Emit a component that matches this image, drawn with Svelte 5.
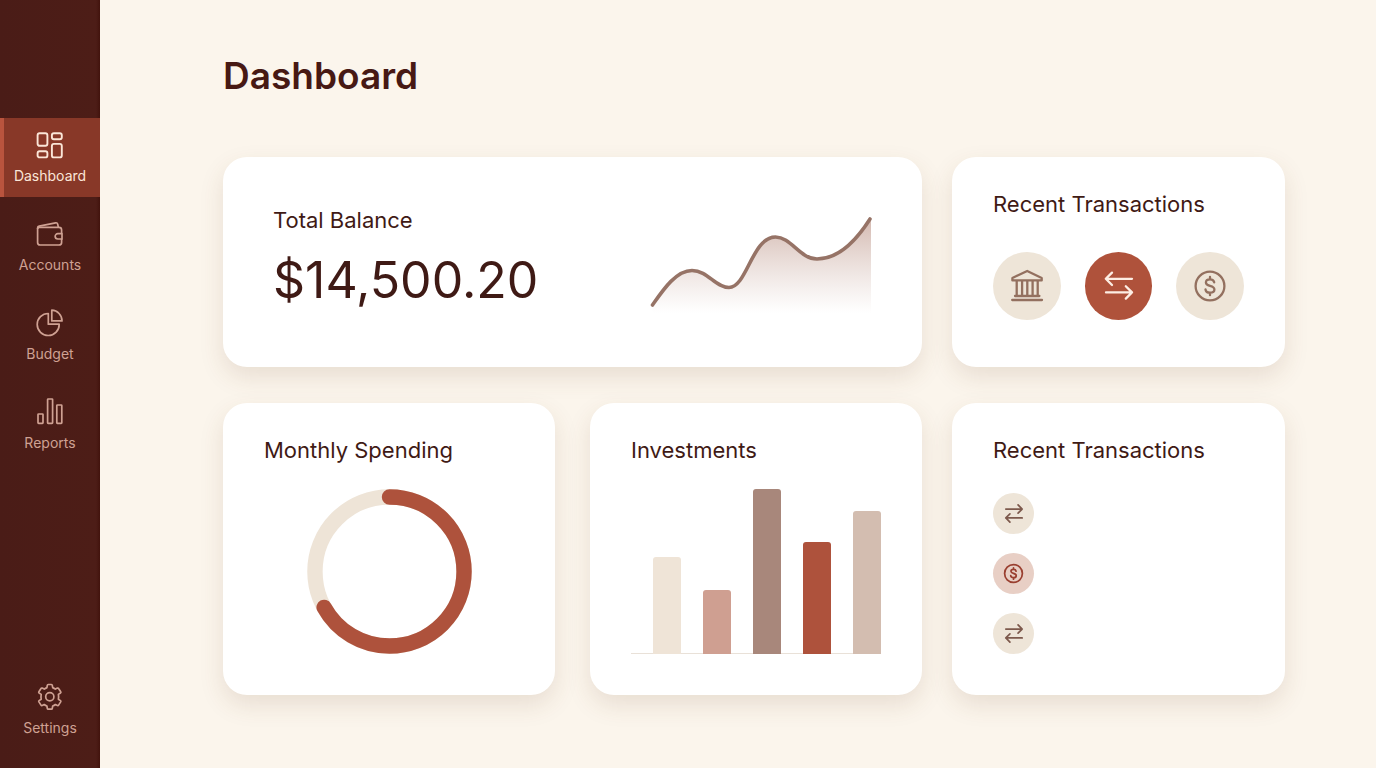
<script>
  const items = [
    { id: 'dashboard', label: 'Dashboard' },
    { id: 'accounts', label: 'Accounts' },
    { id: 'budget', label: 'Budget' },
    { id: 'reports', label: 'Reports' }
  ];
  let active = $state('dashboard');

  const bars = [
    { height: 97, color: '#efe4d7' },
    { height: 64, color: '#cf9f91' },
    { height: 165, color: '#a8877b' },
    { height: 112, color: '#ae523c' },
    { height: 143, color: '#d3bdb0' }
  ];

  const spent = 67;

  const quick = [
    { kind: 'bank', label: 'Bank' },
    { kind: 'transfer', label: 'Transfer' },
    { kind: 'coin', label: 'Payment' }
  ];
  const recent = [
    { kind: 'swap', label: 'Transfer' },
    { kind: 'coin', label: 'Payment' },
    { kind: 'swap', label: 'Transfer' }
  ];
</script>

{#snippet navIcon(id)}
  <svg class="nav-icon" viewBox="0 0 28 28" aria-hidden="true">
    {#if id === 'dashboard'}
      <rect x="1.6" y="2.2" width="9.8" height="12.6" rx="2" />
      <rect x="15.9" y="2.2" width="9.9" height="6" rx="2" />
      <rect x="15.9" y="12.9" width="9.9" height="13.5" rx="2" />
      <rect x="1.6" y="20.2" width="9.8" height="6.2" rx="2" />
    {:else if id === 'accounts'}
      <path d="M25.6 13.6V10Q25.6 7.4 23 7.4H3.4Q1.6 7.4 1.6 9.2V22.4Q1.6 25 4.2 25H23Q25.6 25 25.6 22.4V19" />
      <path d="M1.6 9V8Q1.6 6.5 3.2 6.2L19.6 2.8Q21.3 2.5 21.7 4.2L22.4 7.4" />
      <path d="M26 13.7H21.8A2.6 2.6 0 0 0 21.8 19H26Z" />
    {:else if id === 'budget'}
      <path d="M12.3 4.5V15.2H23.2A11 11 0 1 1 12.3 4.5Z" />
      <path d="M15.8 1.2A10.6 10.6 0 0 1 26 11.9H15.8Z" />
    {:else if id === 'reports'}
      <rect x="2" y="16" width="5" height="9.4" rx="0.6" />
      <rect x="11.6" y="1" width="5" height="24.4" rx="0.6" />
      <rect x="20.8" y="7" width="5" height="18.4" rx="0.6" />
    {:else}
      <circle cx="13.8" cy="13.8" r="4.1" />
      <path d="M12.2 1.5H15.4Q16.2 1.5 16.3 2.3L16.7 4.6Q18.2 5.2 19.4 6.1L21.4 5.1Q22.2 4.8 22.6 5.5L24.7 8.7Q25.2 9.5 24.5 10L22.4 11.4Q22.8 13.8 22.4 16.2L24.5 17.6Q25.2 18.1 24.7 18.9L22.6 22.1Q22.2 22.8 21.4 22.5L19.4 21.5Q18.2 22.4 16.7 23L16.3 25.3Q16.2 26.1 15.4 26.1H12.2Q11.4 26.1 11.3 25.3L10.9 23Q9.4 22.4 8.2 21.5L6.2 22.5Q5.4 22.8 5 22.1L2.9 18.9Q2.4 18.1 3.1 17.6L5.2 16.2Q4.8 13.8 5.2 11.4L3.1 10Q2.4 9.5 2.9 8.7L5 5.5Q5.4 4.8 6.2 5.1L8.2 6.1Q9.4 5.2 10.9 4.6L11.3 2.3Q11.4 1.5 12.2 1.5Z" />
    {/if}
  </svg>
{/snippet}

{#snippet glyph(kind)}
  <svg viewBox="0 0 34 34" aria-hidden="true">
    {#if kind === 'bank'}
      <path d="M17.2 2L31.7 9V11.4H2.4V9Z M6.7 11.4V27 M12.1 11.4V27 M17.3 11.4V27 M22.6 11.4V27 M27.7 11.4V27 M5 27H29.4 M2.2 31H32" />
    {:else if kind === 'transfer'}
      <path d="M30 9.8H3.8 M10 3.6L3.8 9.8L10 16 M4 23.4H30 M23.8 17.2L30 23.4L23.8 29.6" />
    {:else if kind === 'swap'}
      <path d="M4.6 9.8H31 M24.4 3.2L31 9.8L24.4 16.4 M31 24.2H4.6 M11.2 17.6L4.6 24.2L11.2 30.8" />
    {:else}
      <circle cx="17" cy="17" r="14.4" />
      <path d="M21.2 13.3C20.8 11.3 19.2 10.4 17 10.4C14.6 10.4 12.9 11.6 12.9 13.5C12.9 15.5 14.6 16.2 17 16.9C19.6 17.6 21.4 18.4 21.4 20.5C21.4 22.5 19.6 23.7 17 23.7C14.6 23.7 12.8 22.6 12.5 20.5 M17 7.9V10.4 M17 23.7V26.2" />
    {/if}
  </svg>
{/snippet}

{#snippet navLink(id, label)}
  <a
    class="nav-link"
    class:active={active === id}
    href={'#' + id}
    aria-current={active === id ? 'page' : undefined}
    onclick={() => (active = id)}
  >
    {@render navIcon(id)}
    <span>{label}</span>
  </a>
{/snippet}

<div class="app">
  <nav class="sidebar" aria-label="Main">
    <div class="group">
      {#each items as item}
        {@render navLink(item.id, item.label)}
      {/each}
    </div>
    {@render navLink('settings', 'Settings')}
  </nav>

  <main>
    <h1>Dashboard</h1>
    <div class="board">
      <section class="card balance">
        <div>
          <h2>Total Balance</h2>
          <p class="amount">$14,500.20</p>
        </div>
        <svg class="trend" viewBox="0 -6 222 106" aria-hidden="true">
          <defs>
            <linearGradient id="trend-fill" x1="0" y1="0" x2="0" y2="1">
              <stop offset="0" stop-color="#b98d7f" stop-opacity="0.62" />
              <stop offset="0.5" stop-color="#c3a094" stop-opacity="0.32" />
              <stop offset="1" stop-color="#c9aca2" stop-opacity="0" />
            </linearGradient>
          </defs>
          <path
            fill="url(#trend-fill)"
            d="M2.5 90C13 75 26 55.5 42 55.5C58 55.5 65 72.5 79 72.5C97 72.5 102 22 125.5 22C141 22 150 44 167 44C189 44 206 26 221 3.5V98H2.5Z"
          />
          <path
            class="line"
            d="M2.5 90C13 75 26 55.5 42 55.5C58 55.5 65 72.5 79 72.5C97 72.5 102 22 125.5 22C141 22 150 44 167 44C189 44 206 26 220 4"
          />
        </svg>
      </section>

      <section class="card quick">
        <h2>Recent Transactions</h2>
        <div class="quick-row">
          {#each quick as q}
            <button class="round {q.kind}" type="button" aria-label={q.label}>{@render glyph(q.kind)}</button>
          {/each}
        </div>
      </section>

      <div class="pair">
        <section class="card">
          <h2>Monthly Spending</h2>
          <svg class="donut" viewBox="0 0 166 166" aria-hidden="true">
            <circle cx="83" cy="83" r="75" />
            <circle class="spent" cx="83" cy="83" r="75" pathLength="100" stroke-dasharray="{spent} 100" transform="rotate(-90 83 83)" />
          </svg>
        </section>
        <section class="card">
          <h2>Investments</h2>
          <div class="chart">
            {#each bars as bar}
              <div class="bar" style="height: {bar.height}px; background: {bar.color}"></div>
            {/each}
          </div>
        </section>
      </div>

      <section class="card">
        <h2>Recent Transactions</h2>
        <ul>
          {#each recent as r}
            <li class={r.kind}>{@render glyph(r.kind)}</li>
          {/each}
        </ul>
      </section>
    </div>
  </main>
</div>

<style>
  :global(body) {
    margin: 0;
    background: #fbf5ec;
  }
  .app {
    display: flex;
    min-height: 100vh;
    font-family: Inter, 'Liberation Sans', sans-serif;
    color: #3f1a15;
  }
  .sidebar {
    box-sizing: border-box;
    flex: 0 0 100px;
    display: flex;
    flex-direction: column;
    justify-content: space-between;
    padding: 118px 0 19px;
    background: linear-gradient(90deg, #4a1c17, #4d1d17 96%, #42130d);
  }
  .group {
    display: flex;
    flex-direction: column;
    gap: 10px;
  }
  .nav-link {
    display: flex;
    flex-direction: column;
    align-items: center;
    gap: 7px;
    padding: 13px 0 11px;
    color: #cfa193;
    font-size: 14px;
    line-height: 20px;
    text-decoration: none;
  }
  .nav-link.active {
    color: #fbe6d8;
    background: #883828;
    box-shadow: inset 4px 0 #b9543e;
  }
  .nav-icon {
    width: 28px;
    height: 28px;
    fill: none;
    stroke: currentColor;
    stroke-width: 1.7;
    stroke-linejoin: round;
  }
  .active .nav-icon {
    stroke-width: 1.9;
  }
  main {
    flex: 1;
    min-width: 0;
    padding: 52px 91px 73px 123px;
  }
  h1 {
    margin: 0 0 57px;
    font-size: 37px;
    font-weight: 600;
    line-height: 48px;
    color: #471914;
  }
  .board {
    display: grid;
    grid-template-columns: minmax(0, 699fr) minmax(0, 333fr);
    gap: 36px 30px;
  }
  .pair {
    display: grid;
    grid-template-columns: 1fr 1fr;
    gap: 35px;
  }
  .card {
    display: flex;
    flex-direction: column;
    padding: 33px 41px 41px;
    border-radius: 24px;
    background: #fff;
    box-shadow: 0 10px 24px rgba(110, 70, 40, 0.13);
  }
  h2 {
    margin: 0 0 25px;
    font-size: 22px;
    font-weight: 400;
    line-height: 28px;
    white-space: nowrap;
  }
  .balance {
    flex-direction: row;
    justify-content: space-between;
    align-items: center;
    padding: 0 50px;
  }
  .balance h2 {
    margin: 0;
  }
  .amount {
    margin: 16px 0 8px;
    font-size: 50px;
    line-height: 60px;
  }
  .trend {
    width: 222px;
    height: 106px;
    overflow: visible;
  }
  .line {
    fill: none;
    stroke: #967366;
    stroke-width: 3.6;
    stroke-linecap: round;
  }
  .quick {
    padding-bottom: 47px;
  }
  .quick h2 {
    margin-bottom: 34px;
  }
  .quick-row {
    display: flex;
    gap: 24px;
  }
  .round {
    display: grid;
    place-items: center;
    width: 68px;
    height: 68px;
    padding: 0;
    border: 0;
    border-radius: 50%;
    color: #93705f;
    background: #eee5d8;
  }
  .round.transfer {
    color: #fdeee4;
    background: #af523b;
  }
  .round svg,
  li svg {
    width: 34px;
    height: 34px;
    fill: none;
    stroke: currentColor;
    stroke-width: 2.3;
    stroke-linecap: round;
    stroke-linejoin: round;
  }
  .donut {
    align-self: center;
    width: 165px;
    height: 165px;
    fill: none;
    stroke: #eee4d7;
    stroke-width: 15.5;
  }
  .spent {
    stroke: #ae523c;
    stroke-linecap: round;
  }
  .chart {
    box-sizing: border-box;
    display: flex;
    justify-content: space-between;
    align-items: flex-end;
    height: 165px;
    padding-left: 22px;
    background: linear-gradient(#e9e1d8, #e9e1d8) bottom / 100% 1px no-repeat;
  }
  .bar {
    width: 28px;
    border-radius: 3px 3px 0 0;
  }
  ul {
    display: flex;
    flex: 1;
    flex-direction: column;
    justify-content: flex-end;
    gap: 19px;
    margin: 0;
    padding: 0;
    list-style: none;
  }
  li {
    display: grid;
    place-items: center;
    width: 41px;
    height: 41px;
    border-radius: 50%;
    color: #7d594c;
    background: #eee5d8;
  }
  li.coin {
    color: #9a3f30;
    background: #e8cfc5;
  }
  li svg {
    width: 21px;
    height: 21px;
    stroke-width: 2.8;
  }
</style>
